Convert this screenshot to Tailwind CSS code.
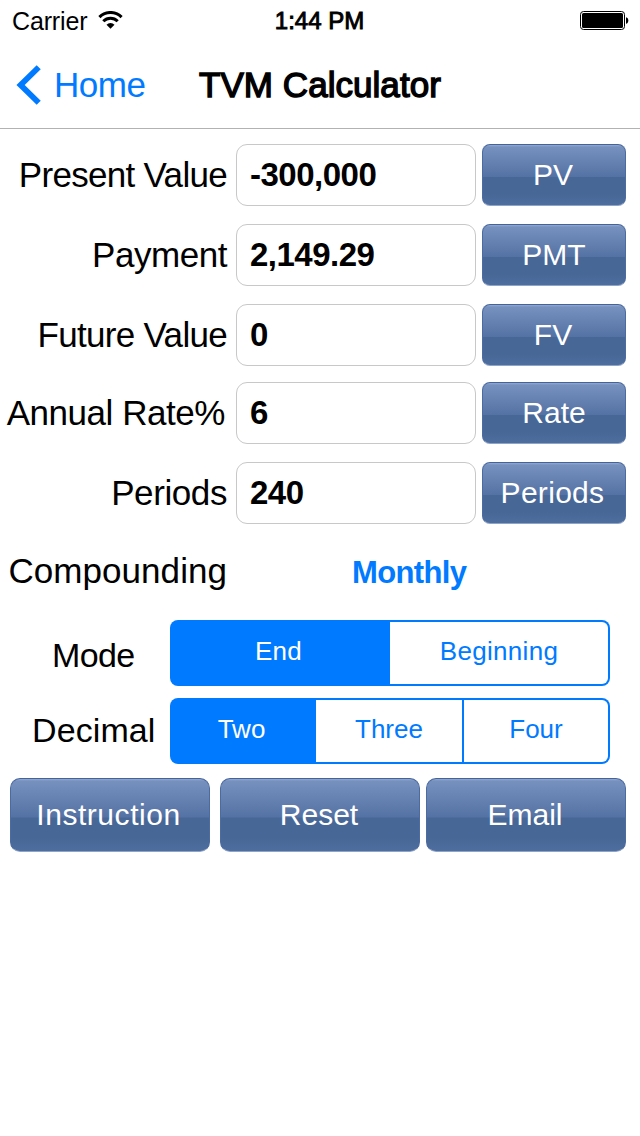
<!doctype html>
<html lang="en">
<head>
    <meta charset="UTF-8">
    <meta name="viewport" content="width=device-width, initial-scale=1.0">
    <title>TVM Calculator</title>
    <script src="https://cdn.jsdelivr.net/npm/@tailwindcss/browser@4"></script>
</head>
<body class="w-[640px] h-[1136px] overflow-hidden bg-white text-black font-['Liberation_Sans',Arial,sans-serif]">
<header class="h-[129px] border-b border-[#b2b2b2]">
    <!-- status bar -->
    <div class="grid grid-cols-3 items-center h-10 pl-3 pr-[11px]">
        <div class="flex items-center gap-[11px]">
            <span class="pt-0.5 text-[25px] leading-none tracking-[-0.15px]">Carrier</span>
            <svg class="w-[25px] h-[18px]" viewBox="0 0 25 18" fill="none" stroke="#000" stroke-width="3">
                <path d="M1.4 6.1a15.6 15.6 0 0 1 22.2 0"/>
                <path d="M5.3 10.3a10.2 10.2 0 0 1 14.4 0"/>
                <path d="M12.5 17.8l-4-4.1a5.8 5.8 0 0 1 8 0z" fill="#000" stroke="none"/>
            </svg>
        </div>
        <span class="pt-px pr-0.5 text-center text-[24px] leading-none whitespace-nowrap [-webkit-text-stroke:0.9px_#000]">1:44 PM</span>
        <svg class="w-[50px] h-5 justify-self-end" viewBox="0 0 50 20">
            <rect x="1.5" y="1.5" width="44" height="18" rx="3" fill="none" stroke="#000"/>
            <rect x="3" y="3" width="41" height="15" rx="1.5"/>
            <path d="M47 7.2c1.5.3 2.3 1.6 2.3 3.3s-.8 3-2.3 3.3z"/>
        </svg>
    </div>
    <!-- nav bar -->
    <div class="flex items-center h-[88px] pt-px">
        <a href="#" class="flex items-center w-[199px] pl-4 gap-[13px] text-[#007aff]">
            <svg class="w-[25px] h-10" viewBox="0 0 25 40" fill="none" stroke="currentColor" stroke-width="5.8">
                <path d="M22.7 2.2L4.6 20l18.1 17.8"/>
            </svg>
            <span class="text-[35px] leading-10 tracking-[-0.5px]">Home</span>
        </a>
        <h1 class="text-[35px] leading-10 tracking-[0.05px] [-webkit-text-stroke:1.4px_#000]">TVM Calculator</h1>
    </div>
</header>

<main>
    <div class="flex flex-col gap-[18px] pt-[15px] pr-[14px]">
        <div class="flex h-[62px] items-center">
            <label class="w-[228px] pb-0.5 pr-px text-right text-[35px] leading-none tracking-[-0.7px] whitespace-nowrap">Present Value</label>
            <div class="ml-2 w-60 h-full flex items-center pl-[13px] rounded-[11px] border border-[#c8c8c8] text-[33px] font-bold tracking-[-0.5px]">-300,000</div>
            <button class="ml-1.5 w-36 h-full pb-0.5 pr-0.5 rounded-lg border border-t-[#44639b] border-x-[#4c6ba0] border-b-[#8fa3c5] text-white text-[30px] bg-[linear-gradient(#93aad0_0,#7691be_2px,#5472a4_53%,#476797_54%,#476797_82%,#4e6e9f_100%)]">PV</button>
        </div>
        <div class="flex h-[62px] items-center">
            <label class="w-[228px] pb-0.5 pr-px text-right text-[35px] leading-none tracking-[-0.45px] whitespace-nowrap">Payment</label>
            <div class="ml-2 w-60 h-full flex items-center pl-[13px] rounded-[11px] border border-[#c8c8c8] text-[33px] font-bold tracking-[-0.5px]">2,149.29</div>
            <button class="ml-1.5 w-36 h-full pb-0.5 rounded-lg border border-t-[#44639b] border-x-[#4c6ba0] border-b-[#8fa3c5] text-white text-[30px] bg-[linear-gradient(#93aad0_0,#7691be_2px,#5472a4_53%,#476797_54%,#476797_82%,#4e6e9f_100%)]">PMT</button>
        </div>
        <div class="flex h-[62px] items-center">
            <label class="w-[228px] pb-0.5 pr-px text-right text-[35px] leading-none tracking-[-0.7px] whitespace-nowrap">Future Value</label>
            <div class="ml-2 w-60 h-full flex items-center pl-[13px] rounded-[11px] border border-[#c8c8c8] text-[33px] font-bold">0</div>
            <button class="ml-1.5 w-36 h-full pb-0.5 pr-0.5 rounded-lg border border-t-[#44639b] border-x-[#4c6ba0] border-b-[#8fa3c5] text-white text-[30px] bg-[linear-gradient(#93aad0_0,#7691be_2px,#5472a4_53%,#476797_54%,#476797_82%,#4e6e9f_100%)]">FV</button>
        </div>
        <div class="flex h-[62px] items-center -mt-0.5">
            <label class="w-[228px] pb-0.5 pr-[3px] text-right text-[35px] leading-none tracking-[-0.45px] whitespace-nowrap">Annual Rate%</label>
            <div class="ml-2 w-60 h-full flex items-center pl-[13px] rounded-[11px] border border-[#c8c8c8] text-[33px] font-bold">6</div>
            <button class="ml-1.5 w-36 h-full pb-0.5 rounded-lg border border-t-[#44639b] border-x-[#4c6ba0] border-b-[#8fa3c5] text-white text-[30px] bg-[linear-gradient(#93aad0_0,#7691be_2px,#5472a4_53%,#476797_54%,#476797_82%,#4e6e9f_100%)]">Rate</button>
        </div>
        <div class="flex h-[62px] items-center">
            <label class="w-[228px] pb-0.5 pr-px text-right text-[35px] leading-none tracking-[-0.4px] whitespace-nowrap">Periods</label>
            <div class="ml-2 w-60 h-full flex items-center pl-[13px] rounded-[11px] border border-[#c8c8c8] text-[33px] font-bold tracking-[-0.5px]">240</div>
            <button class="ml-1.5 w-36 h-full pb-0.5 pr-[3px] rounded-lg border border-t-[#44639b] border-x-[#4c6ba0] border-b-[#8fa3c5] text-white text-[30px] tracking-[0.3px] bg-[linear-gradient(#93aad0_0,#7691be_2px,#5472a4_53%,#476797_54%,#476797_82%,#4e6e9f_100%)]">Periods</button>
        </div>
    </div>

    <div class="flex items-center h-[60px] mt-[17px]">
        <label class="w-[228px] pb-0.5 pr-px text-right text-[35px] leading-none tracking-[0.05px]">Compounding</label>
        <a href="#" class="ml-[124px] pt-0.5 text-[31px] leading-none font-bold tracking-[-0.65px] text-[#007aff]">Monthly</a>
    </div>

    <!-- segmented controls -->
    <div class="flex items-center h-[66px] mt-[19px]">
        <label class="w-[170px] pl-[52px] pt-1 text-[34px] leading-none tracking-[-0.6px]">Mode</label>
        <div class="grid grid-cols-2 w-[440px] h-full text-[26px] tracking-[0.3px] text-[#007aff]">
            <span class="flex items-center justify-center pb-1 pr-[3px] rounded-l-lg bg-[#007aff] text-white">End</span>
            <span class="flex items-center justify-center pb-1 rounded-r-lg border-2 border-l-0 border-[#007aff]">Beginning</span>
        </div>
    </div>
    <div class="flex items-center h-[66px] mt-3">
        <label class="w-[170px] pl-8 pb-0.5 text-[34px] leading-none tracking-[0.1px]">Decimal</label>
        <div class="grid grid-cols-[146px_148px_146px] w-[440px] h-full text-[26px] text-[#007aff]">
            <span class="flex items-center justify-center pb-1 pr-[3px] rounded-l-lg bg-[#007aff] text-white">Two</span>
            <span class="flex items-center justify-center pb-1 border-2 border-l-0 border-[#007aff]">Three</span>
            <span class="flex items-center justify-center pb-1 rounded-r-lg border-2 border-l-0 border-[#007aff]">Four</span>
        </div>
    </div>

    <div class="flex mt-[14px] pl-2.5">
        <button class="w-[200px] h-[74px] pb-0.5 pr-[3px] rounded-[10px] border border-t-[#44639b] border-x-[#4c6ba0] border-b-[#8fa3c5] text-white text-[30px] tracking-[0.55px] bg-[linear-gradient(#93aad0_0,#7691be_2px,#5472a4_53%,#476797_54%,#476797_82%,#4e6e9f_100%)]">Instruction</button>
        <button class="ml-2.5 w-[200px] h-[74px] pb-0.5 pr-0.5 rounded-[10px] border border-t-[#44639b] border-x-[#4c6ba0] border-b-[#8fa3c5] text-white text-[30px] bg-[linear-gradient(#93aad0_0,#7691be_2px,#5472a4_53%,#476797_54%,#476797_82%,#4e6e9f_100%)]">Reset</button>
        <button class="ml-1.5 w-[200px] h-[74px] pb-0.5 pr-0.5 rounded-[10px] border border-t-[#44639b] border-x-[#4c6ba0] border-b-[#8fa3c5] text-white text-[30px] bg-[linear-gradient(#93aad0_0,#7691be_2px,#5472a4_53%,#476797_54%,#476797_82%,#4e6e9f_100%)]">Email</button>
    </div>
</main>
</body>
</html>
